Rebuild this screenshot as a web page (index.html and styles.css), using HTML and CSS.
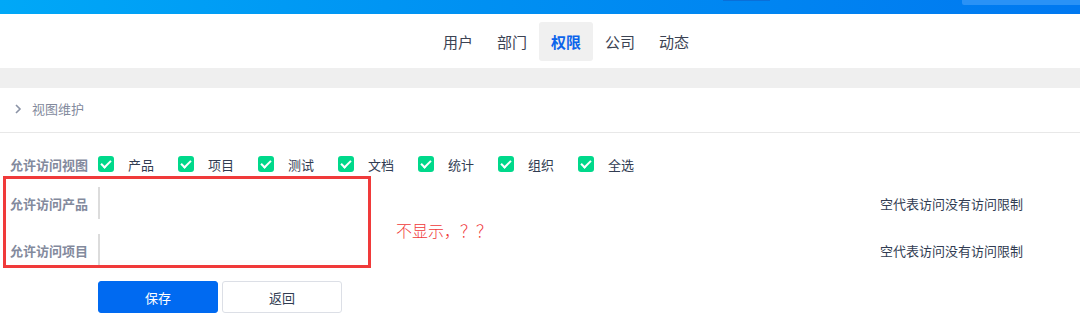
FILE: index.html
```html
<!DOCTYPE html>
<html lang="zh-CN">
<head>
    <meta charset="UTF-8">
    <title>权限 - 视图维护</title>
    <link rel="stylesheet" href="styles.css">
</head>
<body>
    <header class="topbar">
        <div class="topbar-mark"></div>
        <div class="topbar-tool"></div>
    </header>

    <nav class="subnav">
        <a class="subnav-item">用户</a>
        <a class="subnav-item">部门</a>
        <a class="subnav-item active">权限</a>
        <a class="subnav-item">公司</a>
        <a class="subnav-item">动态</a>
    </nav>

    <div class="band"></div>

    <div class="panel">
        <div class="panel-title">
            <svg class="chevron" width="8" height="10" viewBox="0 0 8 10">
                <path d="M2 1 L6 5 L2 9" fill="none" stroke="#8b93a6" stroke-width="1.6"/>
            </svg>
            <span>视图维护</span>
        </div>

        <form class="form">
            <div class="row row-view">
                <label class="row-label">允许访问视图</label>
                <div class="checks">
                    <span class="check"><i class="box"></i>产品</span>
                    <span class="check"><i class="box"></i>项目</span>
                    <span class="check"><i class="box"></i>测试</span>
                    <span class="check"><i class="box"></i>文档</span>
                    <span class="check"><i class="box"></i>统计</span>
                    <span class="check"><i class="box"></i>组织</span>
                    <span class="check"><i class="box"></i>全选</span>
                </div>
            </div>
            <div class="row row-field">
                <label class="row-label">允许访问产品</label>
                <div class="picker"></div>
                <span class="help">空代表访问没有访问限制</span>
            </div>
            <div class="row row-field row-last">
                <label class="row-label">允许访问项目</label>
                <div class="picker"></div>
                <span class="help">空代表访问没有访问限制</span>
            </div>
            <div class="actions">
                <button type="button" class="btn btn-primary">保存</button>
                <button type="button" class="btn">返回</button>
            </div>

            <div class="mark-box"></div>
            <div class="mark-note">不显示，？？</div>
        </form>
    </div>
</body>
</html>
```

FILE: styles.css
```css
body {
    margin: 0;
    font-family: "Noto Sans CJK SC", "Noto Sans", sans-serif;
    font-size: 13px;
    color: #313c52;
    background: #fff;
}

.topbar {
    height: 14px;
    background: linear-gradient(90deg, #00a8f7 0%, #0090f2 45%, #0078f0 100%);
    display: flex;
    justify-content: flex-end;
}

.topbar-mark {
    width: 47px;
    height: 1px;
    margin-right: 192px;
    background: #0a6fd8;
}

.topbar-tool {
    width: 118px;
    height: 5px;
    background: #2a92f6;
    border-bottom-left-radius: 2px;
}

.subnav {
    height: 54px;
    display: flex;
    justify-content: center;
    align-items: center;
    padding-left: 52px;
}

.subnav-item {
    height: 39px;
    line-height: 39px;
    padding: 0 12px;
    font-size: 15px;
    color: #3c4353;
    border-radius: 3px;
}

.subnav-item.active {
    background: #f0f0f0;
    color: #0c64eb;
    font-weight: 700;
}

.band {
    height: 20px;
    background: #efefef;
}

.panel-title {
    height: 41px;
    display: flex;
    align-items: center;
    gap: 10px;
    padding-left: 14px;
    padding-bottom: 3px;
    border-bottom: 1px solid #e8e8e8;
    color: #838a9d;
    font-size: 13px;
}

.chevron {
    margin-top: 1px;
}

.form {
    position: relative;
    padding-top: 16px;
}

.row {
    display: flex;
    align-items: center;
    padding-right: 57px;
}

.row-label {
    width: 88px;
    padding-left: 10px;
    font-weight: 700;
    color: #838a9d;
    white-space: nowrap;
}

.row-view {
    height: 30px;
}

.checks {
    display: flex;
}

.check {
    width: 80px;
    display: flex;
    align-items: center;
    color: #313c52;
}

.box {
    width: 16px;
    height: 16px;
    margin-right: 14px;
    border-radius: 3px;
    background: #00d98b;
    position: relative;
}

.box::after {
    content: "";
    position: absolute;
    left: 5px;
    top: 2px;
    width: 4px;
    height: 8px;
    border: solid #fff;
    border-width: 0 2.5px 2.5px 0;
    transform: rotate(45deg);
}

.row-field {
    height: 36px;
    margin-top: 6px;
}

.row-last {
    margin-top: 11px;
}

.picker {
    flex: 1;
    height: 32px;
    border-left: 2px solid #dcdcdc;
}

.help {
    color: #313c52;
}

.actions {
    display: flex;
    gap: 4px;
    margin-top: 13px;
    padding-left: 98px;
}

.btn {
    width: 120px;
    height: 32px;
    border-radius: 3px;
    border: 1px solid #dcdfe6;
    background: #fff;
    color: #313c52;
    font-family: inherit;
    font-size: 13px;
}

.btn-primary {
    background: #006af1;
    border-color: #006af1;
    color: #fff;
}

.mark-box {
    position: absolute;
    left: 3px;
    top: 43px;
    width: 362px;
    height: 86px;
    border: 3px solid #f03a3a;
}

.mark-note {
    position: absolute;
    left: 396px;
    top: 85px;
    color: #f03a3a;
    font-size: 16px;
    font-weight: 300;
}
```
